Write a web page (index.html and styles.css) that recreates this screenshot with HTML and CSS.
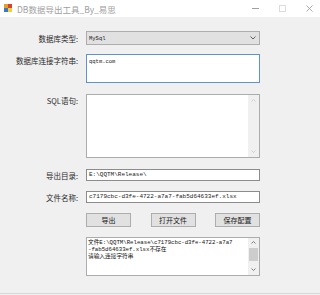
FILE: index.html
```html
<!DOCTYPE html>
<html lang="zh-CN">
<head>
<meta charset="UTF-8" />
<title>DB数据导出工具_By_易思</title>
<link rel="stylesheet" href="styles.css">
</head>
<body>

<div class="titlebar">
  <svg class="appicon" width="8" height="8" viewBox="0 0 8 8">
    <rect x="0" y="0" width="4" height="4" fill="#e8a020"/>
    <rect x="4" y="0" width="4" height="4" fill="#d84030"/>
    <rect x="0" y="4" width="4" height="4" fill="#3a78c8"/>
    <rect x="4" y="4" width="4" height="4" fill="#f0d040"/>
  </svg>
  <span class="title">DB数据导出工具_By_易思</span>
  <div class="winbtns">
    <svg width="7" height="7" viewBox="0 0 7 7"><line x1="0" y1="3.5" x2="7" y2="3.5" stroke="#a0a0a0" stroke-width="1"/></svg>
    <svg width="7" height="7" viewBox="0 0 7 7"><rect x="0.5" y="0.5" width="6" height="6" fill="none" stroke="#dcdcdc" stroke-width="1"/></svg>
    <svg width="7" height="7" viewBox="0 0 7 7"><path d="M0.5 0.5 L6.5 6.5 M6.5 0.5 L0.5 6.5" stroke="#a0a0a0" stroke-width="0.9"/></svg>
  </div>
</div>

<div class="form">
  <div class="row center">
    <label>数据库类型:</label>
    <div class="combo">
      <span>MySql</span>
      <svg width="6" height="4" viewBox="0 0 6 4"><path d="M0.5 0.5 L3 3 L5.5 0.5" fill="none" stroke="#606060" stroke-width="1"/></svg>
    </div>
  </div>

  <div class="row top gap12">
    <label>数据库连接字符串:</label>
    <div class="textbox conn">qqtm.com</div>
  </div>

  <div class="row top gap11">
    <label>SQL语句:</label>
    <div class="textbox multi sql">
      <div class="content"></div>
      <div class="vscroll">
        <svg width="5" height="3" viewBox="0 0 5 3"><path d="M0.5 2.5 L2.5 0.5 L4.5 2.5" fill="none" stroke="#c8c8c8" stroke-width="0.8"/></svg>
        <svg width="5" height="3" viewBox="0 0 5 3"><path d="M0.5 0.5 L2.5 2.5 L4.5 0.5" fill="none" stroke="#c8c8c8" stroke-width="0.8"/></svg>
      </div>
    </div>
  </div>

  <div class="row center gap11">
    <label>导出目录:</label>
    <div class="textbox single mono">E:\QQTM\Release\</div>
  </div>

  <div class="row center gap10">
    <label>文件名称:</label>
    <div class="textbox single mono">c7179cbc-d3fe-4722-a7a7-fab5d64633ef.xlsx</div>
  </div>

  <div class="row center gap10">
    <label></label>
    <div class="buttons">
      <button>导出</button>
      <button>打开文件</button>
      <button>保存配置</button>
    </div>
  </div>

  <div class="row top">
    <label></label>
    <div class="textbox multi log">
      <div class="content">文件E:\QQTM\Release\c7179cbc-d3fe-4722-a7a7
-fab5d64633ef.xlsx不存在
请输入连接字符串</div>
      <div class="vscroll dark">
        <svg width="5" height="3" viewBox="0 0 5 3"><path d="M0.5 2.5 L2.5 0.5 L4.5 2.5" fill="none" stroke="#606060" stroke-width="0.8"/></svg>
        <div class="thumb"></div>
        <svg width="5" height="3" viewBox="0 0 5 3"><path d="M0.5 0.5 L2.5 2.5 L4.5 0.5" fill="none" stroke="#606060" stroke-width="0.8"/></svg>
      </div>
    </div>
  </div>
</div>

<div class="bottomline"></div>

</body>
</html>
```

FILE: styles.css
```css
body{
  margin: 0;
  width: 320px;
  height: 295px;
  background-color: #f0f0f0;
  font-family: "Noto Sans CJK SC", sans-serif;
  color: #1a1a1a;
  overflow: hidden;
}
.titlebar{
  height: 17px;
  background-color: white;
  display: flex;
  align-items: center;
}
.appicon{
  margin-left: 4px;
  margin-top: -1px;
}
.title{
  margin-left: 5px;
  font-size: 8.5px;
  color: #a0a0a0;
}
.winbtns{
  margin-left: auto;
  display: flex;
  gap: 20px;
  margin-right: 7px;
}
.form{
  padding-top: 14px;
  height: 262px;
}
.row{
  display: flex;
  gap: 8px;
}
.row.center{ align-items: center; }
.row.top{ align-items: flex-start; }
.gap10{ margin-top: 10px; }
.gap11{ margin-top: 11px; }
.gap12{ margin-top: 12px; }
.row.top.gap12{ margin-top: 9px; }
.row label{
  width: 78px;
  text-align: right;
  font-size: 7.5px;
  line-height: 9px;
  flex-shrink: 0;
  color: #2a2a2a;
}
.row.top label{ padding-top: 2px; }
.combo{
  width: 174px;
  height: 14px;
  box-sizing: border-box;
  background-color: #e1e1e1;
  border: 1px solid #adadad;
  display: flex;
  align-items: center;
  justify-content: space-between;
  padding: 0 3px 0 2px;
  font-family: "Liberation Mono", monospace;
  font-size: 5.5px;
}
.textbox{
  width: 174px;
  box-sizing: border-box;
  background-color: white;
  border: 1px solid #a0a0a0;
  font-size: 6px;
}
.conn{
  height: 29px;
  border-color: #5f93d0;
  padding: 3px 2px;
  font-family: "Liberation Mono", monospace;
  font-size: 5.5px;
  line-height: 7px;
}
.single{
  height: 12px;
  border-color: #8c8c8c;
  padding: 0 2px;
  line-height: 10px;
}
.mono{
  font-family: "Liberation Mono", monospace;
}
.multi{
  display: flex;
}
.multi .content{
  flex: 1;
}
.sql{
  height: 64px;
  border-color: #acacac;
}
.vscroll{
  width: 11px;
  background-color: #f0f0f0;
  display: flex;
  flex-direction: column;
  align-items: center;
  justify-content: space-between;
  padding: 4px 0;
  box-sizing: border-box;
}
.buttons{
  width: 174px;
  display: flex;
  justify-content: space-between;
}
.buttons button{
  width: 45px;
  height: 14px;
  padding: 0;
  background-color: #e1e1e1;
  border: 1px solid #adadad;
  font-family: "Noto Sans CJK SC", sans-serif;
  font-size: 7px;
  color: #1a1a1a;
}
.log{
  height: 39px;
  margin-top: 10px;
  border-color: #acacac;
}
.log .content{
  white-space: pre-line;
  font-family: "Liberation Mono", "Noto Sans CJK SC", monospace;
  font-size: 5.7px;
  line-height: 7px;
  padding: 1px 1px;
  color: #101010;
}
.vscroll.dark{
  padding: 3px 0 4px 0;
  justify-content: flex-start;
  gap: 4px;
}
.vscroll.dark svg:last-child{
  margin-top: auto;
}
.thumb{
  width: 9px;
  height: 13px;
  background-color: #cdcdcd;
}
.bottomline{
  height: 1px;
  background-color: #d8d8d8;
}
```
